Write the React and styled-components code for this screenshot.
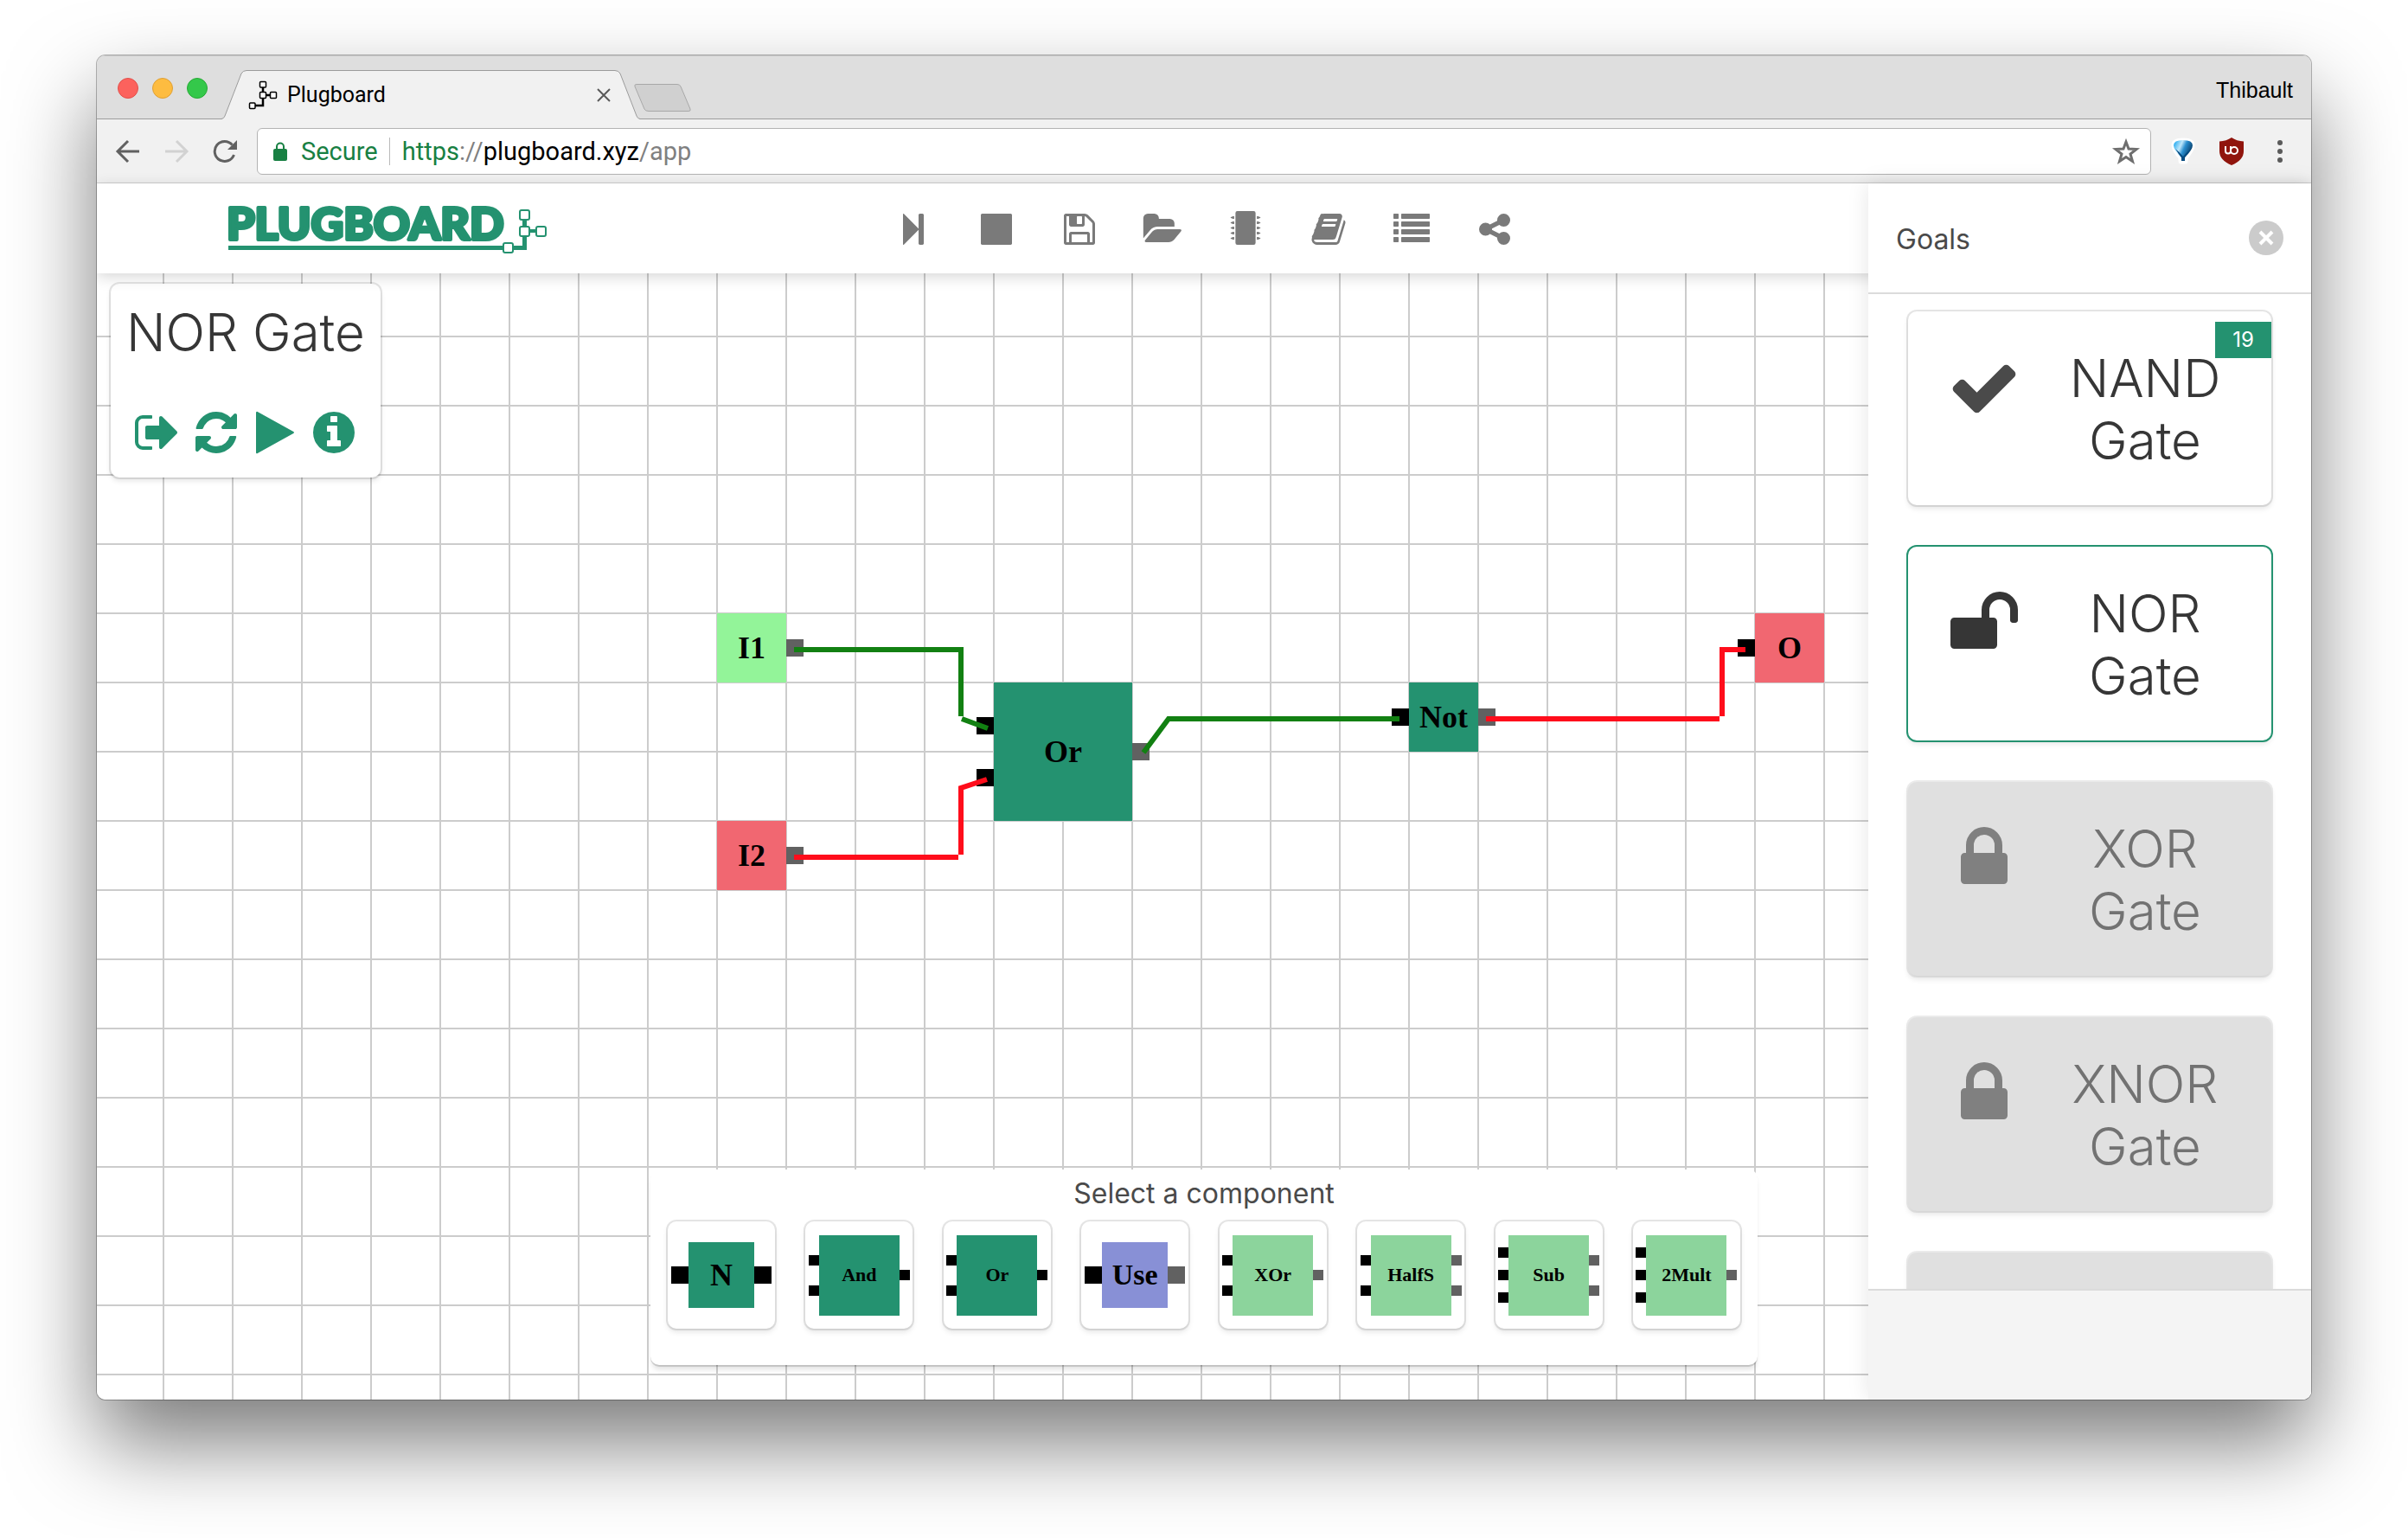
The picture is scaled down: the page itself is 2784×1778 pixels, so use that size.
import React from "react";
import styled, { createGlobalStyle, css } from "styled-components";

const green = "#249270";
const uiFont = `Inter, Roboto, "Liberation Sans", sans-serif`;
const chromeFont = `Roboto, "Liberation Sans", sans-serif`;

const GlobalStyle = createGlobalStyle`
  *, *::before, *::after { box-sizing: border-box; }
  body { margin: 0; background: #fff; color: #4a4a4a; font-family: ${uiFont}; }
  button { margin: 0; padding: 0; border: 0; background: none; color: inherit; font: inherit; cursor: pointer; }
  h1, h2, p, ul { margin: 0; padding: 0; }
  ul { list-style: none; }
  svg { display: block; overflow: visible; }
`;

/* ---------- icons ---------- */

const paths = {
  stepForward:
    "M429 1651q-19 19-32 13t-13-32v-1472q0-26 13-32t32 13l710 710q9 9 13 19v-678q0-26 19-45t45-19h128q26 0 45 19t19 45v1408q0 26-19 45t-45 19h-128q-26 0-45-19t-19-45v-678q-4 10-13 19z",
  stop: "M1664 192v1408q0 26-19 45t-45 19h-1408q-26 0-45-19t-19-45v-1408q0-26 19-45t45-19h1408q26 0 45 19t19 45z",
  save: "M512 1536h768v-384h-768v384zm896 0h128v-896q0-14-10-38.500t-20-34.500l-281-281q-10-10-34-20t-39-10v416q0 40-28 68t-68 28h-576q-40 0-68-28t-28-68v-416h-128v1280h128v-416q0-40 28-68t68-28h832q40 0 68 28t28 68v416zm-384-928v-320q0-13-9.500-22.500t-22.500-9.500h-192q-13 0-22.500 9.500t-9.500 22.500v320q0 13 9.500 22.500t22.500 9.500h192q13 0 22.500-9.500t9.500-22.500zm640 32v928q0 40-28 68t-68 28h-1344q-40 0-68-28t-28-68v-1344q0-40 28-68t68-28h928q40 0 88 20t76 48l280 280q28 28 48 76t20 88z",
  folder:
    "M1829 952q0 31-31 66l-336 396q-43 51-120.500 86.500t-143.500 35.500h-1088q-34 0-60.500-13t-26.500-43q0-31 31-66l336-396q43-51 120.500-86.500t143.500-35.500h1088q34 0 60.500 13t26.500 43zm-343-344v160h-832q-94 0-197 47.500t-164 119.500l-337 396-5 6q0-4-.5-12.500t-.5-12.500v-960q0-92 66-158t158-66h320q92 0 158 66t66 158v32h544q92 0 158 66t66 158z",
  chip:
    "M496 0h800q96 0 96 96v1472q0 96-96 96h-800q-96 0-96-96v-1472q0-96 96-96z" +
    [256, 512, 768, 1024, 1280]
      .map(
        (y) =>
          `M336 ${y}v128h-96v-32h-48q-32 0-32-32t32-32h48v-32zM1456 ${y}v128h96v-32h48q32 0 32-32t-32-32h-48v-32z`
      )
      .join(""),
  book: "M1703 478q40 57 18 129l-275 906q-19 64-76.500 107.500t-122.500 43.500h-923q-77 0-148.500-53.500t-99.500-131.500q-24-67-2-127 0-4 3-27t4-37q1-8-3-21.500t-3-19.500q2-11 8-21t16.500-23.500 16.500-23.500q23-38 45-91.500t30-91.500q3-10 .5-30t-.5-28q3-11 17-28t17-23q21-36 42-92t25-90q1-9-2.500-32t.5-28q4-13 22-30.500t22-22.500q19-26 42.500-84.500t27.500-96.500q1-8-3-25.500t-2-26.500q2-8 9-18t18-23 17-21q8-12 16.500-30.500t15-35 16-36 19.500-32 26.500-23.500 36-11.500 47.500 5.500l-1 3q38-9 51-9h761q74 0 114 56t18 130l-274 906q-36 119-71.500 153.500t-128.500 34.500h-869q-27 0-38 15-11 16-1 43 24 70 144 70h923q29 0 56-15.500t35-41.500l300-987q7-22 5-57 38 15 59 43zm-1064 2q-4 13 2 22.500t20 9.500h608q13 0 25.500-9.500t16.500-22.500l21-64q4-13-2-22.500t-20-9.500h-608q-13 0-25.500 9.500t-16.500 22.500zm-83 256q-4 13 2 22.500t20 9.500h608q13 0 25.500-9.500t16.500-22.500l21-64q4-13-2-22.500t-20-9.500h-608q-13 0-25.500 9.500t-16.500 22.500z",
  list: [128, 512, 896, 1280]
    .map(
      (y) =>
        `M32 ${y}h192q32 0 32 32v192q0 32-32 32h-192q-32 0-32-32v-192q0-32 32-32zM416 ${y}h1344q32 0 32 32v192q0 32-32 32h-1344q-32 0-32-32v-192q0-32 32-32z`
    )
    .join(""),
  share:
    "M1344 1024q133 0 226.500 93.500t93.500 226.500-93.500 226.500-226.500 93.500-226.500-93.500-93.500-226.500q0-12 2-34l-360-180q-92 86-218 86-133 0-226.500-93.500t-93.500-226.500 93.500-226.500 226.500-93.500q126 0 218 86l360-180q-2-22-2-34 0-133 93.500-226.500t226.500-93.500 226.500 93.500 93.500 226.500-93.500 226.500-226.500 93.500q-126 0-218-86l-360 180q2 22 2 34t-2 34l360 180q92-86 218-86z",
  signOut:
    "M704 1440q0 4 1 20t.5 26.500-3 23.500-10 19.500-20.500 6.500h-320q-119 0-203.500-84.500t-84.500-203.500v-704q0-119 84.500-203.500t203.500-84.500h320q13 0 22.500 9.500t9.500 22.500q0 4 1 20t.5 26.500-3 23.500-10 19.500-20.500 6.500h-320q-66 0-113 47t-47 113v704q0 66 47 113t113 47h312l11.500 1 11.500 3 8 5.500 7 9 2 13.500zm928-544q0 26-19 45l-544 544q-19 19-45 19t-45-19-19-45v-288h-448q-26 0-45-19t-19-45v-384q0-26 19-45t45-19h448v-288q0-26 19-45t45-19 45 19l544 544q19 19 19 45z",
  refresh:
    "M1639 1056q0 5-1 7-64 268-268 434.500t-478 166.500q-146 0-282.500-55t-243.500-157l-129 129q-19 19-45 19t-45-19-19-45v-448q0-26 19-45t45-19h448q26 0 45 19t19 45-19 45l-137 137q71 66 161 102t187 36q134 0 250-65t186-179q11-17 53-117 8-23 30-23h192q13 0 22.500 9.500t9.500 22.500zm25-800v448q0 26-19 45t-45 19h-448q-26 0-45-19t-19-45 19-45l138-138q-148-137-349-137-134 0-250 65t-186 179q-11 17-53 117-8 23-30 23h-199q-13 0-22.500-9.500t-9.500-22.500v-7q65-268 270-434.500t480-166.500q146 0 284 55.500t245 156.500l130-129q19-19 45-19t45 19 19 45z",
  play: "M1576 927l-1328 738q-23 13-39.500 3t-16.500-36v-1472q0-26 16.500-36t39.500 3l1328 738q23 13 23 31t-23 31z",
  info: "M1152 1376v-160q0-14-9-23t-23-9h-96v-512q0-14-9-23t-23-9h-320q-14 0-23 9t-9 23v160q0 14 9 23t23 9h96v320h-96q-14 0-23 9t-9 23v160q0 14 9 23t23 9h448q14 0 23-9t9-23zm-128-896v-160q0-14-9-23t-23-9h-192q-14 0-23 9t-9 23v160q0 14 9 23t23 9h192q14 0 23-9t9-23zm640 416q0 209-103 385.500t-279.500 279.500-385.500 103-385.500-103-279.500-279.500-103-385.500 103-385.500 279.500-279.500 385.500-103 385.500 103 279.500 279.500 103 385.500z",
  check:
    "M1671 566q0 40-28 68l-724 724-136 136q-28 28-68 28t-68-28l-136-136-362-362q-28-28-28-68t28-68l136-136q28-28 68-28t68 28l294 295 656-657q28-28 68-28t68 28l136 136q28 28 28 68z",
  unlock:
    "M1728 576v256q0 26-19 45t-45 19h-64q-26 0-45-19t-19-45v-256q0-106-75-181t-181-75-181 75-75 181v192h96q40 0 68 28t28 68v576q0 40-28 68t-68 28h-960q-40 0-68-28t-28-68v-576q0-40 28-68t68-28h672v-192q0-185 131.500-316.500t316.500-131.500 316.500 131.500 131.500 316.500z",
  lock: "M640 768h512v-192q0-106-75-181t-181-75-181 75-75 181v192zm832 96v576q0 40-28 68t-68 28h-960q-40 0-68-28t-28-68v-576q0-40 28-68t68-28h32v-192q0-184 132-316t316-132 316 132 132 316v192h32q40 0 68 28t28 68z",
};

const Icon = ({ name, size }) => (
  <svg width={size} height={size} viewBox="0 0 1792 1792" fill="currentColor" aria-hidden="true">
    <path d={paths[name]} />
  </svg>
);

/* ---------- browser window ---------- */

const Desktop = styled.div`
  display: flex;
  min-height: 100vh;
  padding: 64px 112px 160px;
`;

const Window = styled.div`
  flex: 1;
  min-width: 0;
  display: flex;
  flex-direction: column;
  border-radius: 10px;
  overflow: hidden;
  background: #fff;
  box-shadow: 0 0 0 1px rgba(0, 0, 0, 0.28), 0 50px 100px rgba(0, 0, 0, 0.52);
`;

const TabStrip = styled.div`
  display: flex;
  height: 74px;
  padding: 0 21px 0 24px;
  background: #dedede;
  box-shadow: inset 0 -2px 0 -1px #9b9b9b, inset 0 1px 0 #c4c4c4;
  font-family: ${chromeFont};
`;

const Lights = styled.div`
  display: flex;
  gap: 16px;
  padding-top: 26px;
  width: 120px;
`;

const Light = styled.button`
  width: 24px;
  height: 24px;
  && {
    border: 1px solid ${(p) => p.$edge};
    border-radius: 50%;
    background: ${(p) => p.$fill};
  }
`;

const Tab = styled.div`
  display: grid;
  width: 484px;
  padding-top: 17px;
  > * {
    grid-area: 1 / 1;
  }
`;

const TabLabel = styled.div`
  display: flex;
  align-items: center;
  padding: 0 34px 0 32px;
  gap: 12px;
  color: #000;
  font-size: 25px;
  line-height: 28px;
  span {
    flex: 1;
  }
`;

const NewTab = styled.button`
  align-self: flex-start;
  && {
    margin: 33px 0 0 -7px;
  }
`;

const Profile = styled.button`
  && {
    margin: 26px 0 0 auto;
    align-self: flex-start;
    color: #000;
    font-family: "Liberation Sans", Arial, sans-serif;
    font-size: 25px;
    line-height: 28px;
  }
`;

const BrowserBar = styled.div`
  display: flex;
  align-items: center;
  gap: 28px;
  height: 74px;
  padding: 0 22px;
  background: #f1f1f1;
  border-bottom: 1px solid #cfcfcf;
  font-family: ${chromeFont};
`;

const Address = styled.div`
  flex: 1;
  display: flex;
  align-items: center;
  height: 54px;
  margin: 0 -5px;
  padding: 0 13px 0 18px;
  background: #fff;
  border: 1px solid #b3b3b3;
  border-radius: 6px;
  font-size: 29px;
  line-height: 32px;
`;

const Secure = styled.button`
  display: flex;
  align-items: center;
  gap: 16px;
  && {
    padding-right: 13px;
    border-right: 1px solid #b9b9b9;
    color: #188043;
  }
`;

const Url = styled.div`
  flex: 1;
  padding-left: 14px;
  color: #000;
`;

const UrlPart = styled.span`
  color: ${(p) => (p.$secure ? "#188043" : "#808080")};
`;

/* ---------- application ---------- */

const AppShell = styled.div`
  flex: 1;
  display: grid;
  grid-template-columns: 4fr 1fr;
  grid-template-rows: 104px minmax(0, 1fr);
  min-height: 0;
`;

const TopBar = styled.header`
  grid-area: 1 / 1 / 2 / 3;
  z-index: 1;
  display: grid;
  grid-template-columns: 1fr auto 1fr;
  align-items: center;
  background: #fff;
  box-shadow: 0 4px 16px rgba(0, 0, 0, 0.16);
`;

const Brand = styled.a`
  justify-self: start;
  margin-left: 152px;
`;

const Tools = styled.nav`
  display: flex;
  gap: 54px;
  padding-top: 2px;
  color: #7a7a7a;
`;

const Board = styled.main`
  grid-area: 2 / 1 / 3 / 3;
  position: relative;
  display: flex;
  flex-direction: column;
  align-items: flex-start;
  justify-content: space-between;
  padding: 12px 16px 40px;
  background-color: #fff;
  background-image: linear-gradient(to right, #ccc 2px, transparent 2px),
    linear-gradient(to bottom, #ccc 2px, transparent 2px);
  background-size: 80px 80px;
  background-position: 76px 72px;
`;

const softCard = css`
  background: #fff;
  box-shadow: 0 4px 6px rgba(10, 10, 10, 0.1), 0 0 0 2px rgba(10, 10, 10, 0.1);
`;

const LevelCard = styled.section`
  position: relative;
  ${softCard}
  padding: 20px 18px 24px;
  border-radius: 10px;
  text-align: center;
`;

const Title = styled.h2`
  color: ${(p) => (p.$muted ? "#727272" : "#363636")};
  font-size: 60px;
  font-weight: 300;
  line-height: 72px;
`;

const LevelActions = styled.div`
  display: flex;
  justify-content: center;
  gap: 12px;
  margin-top: 52px;
  color: ${green};
`;

const Wires = styled.svg`
  position: absolute;
  left: 0;
  top: 0;
`;

const Placed = styled.div`
  position: absolute;
  left: ${(p) => p.$x}px;
  top: ${(p) => p.$y}px;
`;

const Gate = styled.div`
  display: flex;
  align-items: center;
`;

const Ports = styled.div`
  display: flex;
  flex-direction: column;
  gap: ${(p) => p.$gap}px;
`;

const Port = styled.i`
  width: ${(p) => p.$size}px;
  height: ${(p) => p.$size}px;
  background: ${(p) => (p.$dim ? "#616161" : "#000")};
`;

const Body = styled.div`
  display: flex;
  align-items: center;
  justify-content: center;
  width: ${(p) => p.$size}px;
  height: ${(p) => p.$size}px;
  background: ${(p) => p.$fill};
  color: #000;
  font: bold ${(p) => p.$font}px / 40px "Liberation Serif", "Times New Roman", serif;
`;

const Tray = styled.section`
  position: relative;
  align-self: center;
  width: 1280px;
  max-width: 100%;
  padding: 8px 20px 42px;
  background: #fff;
  border-radius: 10px;
  box-shadow: 0 2px 0 rgba(10, 10, 10, 0.14), 0 7px 6px -2px rgba(10, 10, 10, 0.12);
  text-align: center;
  p {
    font-size: 32px;
    line-height: 40px;
  }
`;

const TrayItems = styled.div`
  display: flex;
  justify-content: space-between;
  margin-top: 12px;
`;

const TrayButton = styled.button`
  display: flex;
  align-items: center;
  justify-content: center;
  width: 124px;
  height: 124px;
  && {
    ${softCard}
    border-radius: 10px;
  }
`;

const Goals = styled.aside`
  grid-area: 1 / 2 / 3 / 3;
  z-index: 2;
  display: flex;
  flex-direction: column;
  min-height: 0;
  background: #fff;
  box-shadow: 0 0 24px rgba(0, 0, 0, 0.1);
`;

const GoalsHead = styled.div`
  display: flex;
  align-items: center;
  justify-content: space-between;
  flex: none;
  height: 128px;
  padding: 0 32px;
  border-bottom: 2px solid #dbdbdb;
  h2 {
    padding-top: 4px;
    font-size: 32px;
    font-weight: 400;
    line-height: 40px;
  }
`;

const GoalList = styled.ul`
  flex: 1 1 0;
  min-height: 0;
  overflow: hidden;
  display: flex;
  flex-direction: column;
  gap: 48px;
  && {
    padding: 20px 46px 0;
  }
`;

const rings = { done: "rgba(10,10,10,.1)", open: green, locked: "rgba(10,10,10,.08)" };

const GoalCard = styled.li`
  position: relative;
  flex: none;
  border-radius: 10px;
  background: ${(p) => (p.$state === "locked" ? "#e0e0e0" : "#fff")};
  box-shadow: 0 0 0 2px ${(p) => rings[p.$state]}, 0 4px 6px rgba(10, 10, 10, 0.1);
`;

const GoalButton = styled.button`
  display: flex;
  align-items: flex-start;
  width: 100%;
  height: 224px;
  && {
    padding: 41px 48px 0 46px;
    gap: 46px;
  }
  svg {
    flex: none;
    margin-top: 5px;
    color: ${(p) => ({ done: "#4a4a4a", open: "#363636", locked: "#808080" }[p.$state])};
  }
  h2 {
    flex: 1;
  }
`;

const Badge = styled.span`
  position: absolute;
  top: 12px;
  right: 0;
  padding: 0 20px;
  background: ${green};
  color: #fff;
  font-size: 24px;
  line-height: 42px;
`;

const GoalsFoot = styled.div`
  flex: none;
  height: 128px;
  background: #f4f4f4;
  border-top: 2px solid #dbdbdb;
`;

const Logo = () => (
  <svg width="370" height="56" viewBox="0 0 370 56" aria-label="Plugboard">
    <text
      x="-2"
      y="41"
      fill={green}
      stroke={green}
      strokeWidth="4"
      strokeLinejoin="round"
      fontFamily="Lato, sans-serif"
      fontWeight="900"
      fontSize="52"
    >
      PLUGBOARD
    </text>
    <g fill="none" stroke={green}>
      <path d="M0 50.500H342.500V8" strokeWidth="5" />
      <path d="M342 31h16" strokeWidth="4" />
      <g fill="#fff" strokeWidth="2">
        <rect x="318" y="45" width="11" height="11" rx="2" />
        <rect x="337" y="7" width="11" height="11" rx="2" />
        <rect x="337" y="26" width="11" height="11" rx="2" />
        <rect x="356" y="26" width="11" height="11" rx="2" />
      </g>
    </g>
  </svg>
);

const Favicon = () => (
  <svg width="32" height="32" viewBox="0 0 32 32" fill="none" stroke="#000" aria-hidden="true">
    <path d="M6 28h10V4M16 16h12" strokeWidth="2.500" />
    <g fill="#fff" strokeWidth="1.500">
      <rect x="0.500" y="25" width="6.500" height="6.500" rx="1" />
      <rect x="12.500" y="0.500" width="7" height="6.500" rx="1" />
      <rect x="12.500" y="12.500" width="7" height="7" rx="1" />
      <rect x="24.500" y="12.500" width="7" height="7" rx="1" />
    </g>
  </svg>
);

const mint = "#8cd49c";

const GateView = ({ label, fill = green, ins = 0, outs = 0, size, font, port, dim }) => {
  const gap = (n) => (port === 20 ? 40 : n === 3 ? 14 : 23);
  return (
    <Gate>
      <Ports $gap={gap(ins)}>
        {Array.from({ length: ins }, (_, i) => (
          <Port key={i} $size={port} />
        ))}
      </Ports>
      <Body $size={size} $fill={fill} $font={font}>
        {label}
      </Body>
      <Ports $gap={gap(outs)}>
        {Array.from({ length: outs }, (_, i) => (
          <Port key={i} $size={port} $dim={dim} />
        ))}
      </Ports>
    </Gate>
  );
};

const boardGates = [
  { x: 717, y: 393, label: "I1", fill: "#93f499", size: 80, outs: 1 },
  { x: 717, y: 633, label: "I2", fill: "#f16771", size: 80, outs: 1 },
  { x: 1017, y: 473, label: "Or", size: 160, ins: 2, outs: 1 },
  { x: 1497, y: 473, label: "Not", size: 80, ins: 1, outs: 1 },
  { x: 1897, y: 393, label: "O", fill: "#f16771", size: 80, ins: 1 },
];

const trayGates = [
  { label: "N", ins: 1, outs: 1, size: 76, port: 20, font: 36 },
  { label: "And", ins: 2, outs: 1, size: 93, port: 12, font: 22 },
  { label: "Or", ins: 2, outs: 1, size: 93, port: 12, font: 22 },
  { label: "Use", ins: 1, outs: 1, size: 76, port: 20, font: 34, fill: "#8890d6", dim: true },
  { label: "XOr", ins: 2, outs: 1, size: 93, port: 12, font: 22, fill: mint, dim: true },
  { label: "HalfS", ins: 2, outs: 2, size: 93, port: 12, font: 22, fill: mint, dim: true },
  { label: "Sub", ins: 3, outs: 2, size: 93, port: 12, font: 22, fill: mint, dim: true },
  { label: "2Mult", ins: 3, outs: 1, size: 93, port: 12, font: 22, fill: mint, dim: true },
];

const tools = [
  ["stepForward", "Step"],
  ["stop", "Stop"],
  ["save", "Save"],
  ["folder", "Open"],
  ["chip", "Components"],
  ["book", "Guide"],
  ["list", "Goals"],
  ["share", "Share"],
];

const levelActions = [
  ["signOut", "Leave"],
  ["refresh", "Reset"],
  ["play", "Run"],
  ["info", "Info"],
];

const goals = [
  { name: "NAND Gate", state: "done", icon: "check", badge: 19 },
  { name: "NOR Gate", state: "open", icon: "unlock" },
  { name: "XOR Gate", state: "locked", icon: "lock" },
  { name: "XNOR Gate", state: "locked", icon: "lock" },
  { name: "", state: "locked" },
];

export default function App() {
  return (
    <Desktop>
      <GlobalStyle />
      <Window>
        <TabStrip>
          <Lights>
            <Light $fill="#fc625d" $edge="#e2504b" aria-label="Close window" />
            <Light $fill="#fdbc40" $edge="#dfa035" aria-label="Minimise window" />
            <Light $fill="#34c84a" $edge="#27aa35" aria-label="Zoom window" />
          </Lights>
          <Tab>
            <svg width="484" height="57" viewBox="0 0 484 57" aria-hidden="true">
              <path
                d="M0 57L4 53L23 4Q25 .5 29 .5H455Q459 .5 461 4L480 53L484 57Z"
                fill="#f1f1f1"
              />
              <path
                d="M0 56.500Q3 56 4 53L23 4Q25 .5 29 .5H455Q459 .5 461 4L480 53Q481 56 484 56.500"
                fill="none"
                stroke="#9b9b9b"
              />
            </svg>
            <TabLabel>
              <Favicon />
              <span>Plugboard</span>
              <button aria-label="Close tab">
                <svg width="16" height="16" viewBox="0 0 16 16" stroke="#5a5a5a" strokeWidth="2">
                  <path d="M1 1L15 15M15 1L1 15" />
                </svg>
              </button>
            </TabLabel>
          </Tab>
          <NewTab aria-label="New tab">
            <svg width="66" height="32" viewBox="0 0 66 32">
              <path
                d="M3 .5H50Q53 .5 54 3L65 29Q66 31.500 63 31.500H17Q13 31.500 12 29L1 3Q0 .5 3 .5Z"
                fill="#d0d0d0"
                stroke="#a8a8a8"
              />
            </svg>
          </NewTab>
          <Profile>Thibault</Profile>
        </TabStrip>

        <BrowserBar>
          <button aria-label="Back">
            <svg width="28" height="28" viewBox="0 0 28 28" fill="none" stroke="#616161" strokeWidth="3">
              <path d="M27 14H3M14 2L2 14L14 26" />
            </svg>
          </button>
          <button aria-label="Forward">
            <svg width="28" height="28" viewBox="0 0 28 28" fill="none" stroke="#d2d2d2" strokeWidth="3">
              <path d="M1 14H25M14 2L26 14L14 26" />
            </svg>
          </button>
          <button aria-label="Reload">
            <svg width="28" height="28" viewBox="0 0 28 28" fill="none" stroke="#616161" strokeWidth="3">
              <path d="M24.500 18A11.500 11.500 0 1 1 22.500 6.500" />
              <path d="M28 1V12H17Z" fill="#616161" stroke="none" />
            </svg>
          </button>
          <Address>
            <Secure>
              <svg width="16" height="22" viewBox="0 0 16 22" aria-hidden="true">
                <rect y="8" width="16" height="14" rx="2" fill="#188043" />
                <path d="M4 9V5.500A4 4 0 0 1 12 5.500V9" fill="none" stroke="#188043" strokeWidth="2" />
              </svg>
              Secure
            </Secure>
            <Url role="textbox" aria-label="Address" tabIndex={0}>
              <UrlPart $secure>https</UrlPart>
              <UrlPart>://</UrlPart>plugboard.xyz<UrlPart>/app</UrlPart>
            </Url>
            <button aria-label="Bookmark this page">
              <svg width="30" height="28" viewBox="0 0 30 28" fill="none" stroke="#6e6e6e" strokeWidth="3">
                <path d="M15 3L18 11L27 11.500L20 17L22.500 25.500L15 20.500L7.500 25.500L10 17L3 11.500L12 11Z" />
              </svg>
            </button>
          </Address>
          <button aria-label="Balloon extension">
            <svg width="28" height="32" viewBox="0 0 28 32">
              <defs>
                <linearGradient id="balloon" x1="0" x2="1" y1="0" y2="0.500">
                  <stop offset="0" stopColor="#08a0ee" />
                  <stop offset="0.400" stopColor="#bfe6fa" />
                  <stop offset="0.600" stopColor="#2a8fd0" />
                  <stop offset="1" stopColor="#05365f" />
                </linearGradient>
              </defs>
              <path
                d="M14 4Q24 4 24 9Q24 14 16 23V27H12V23Q4 14 4 9Q4 4 14 4Z"
                fill="#fff"
                stroke="#fff"
                strokeWidth="7"
                strokeLinejoin="round"
              />
              <path d="M14 3Q25 3 25 9Q25 14 16 23V27H12V23Q3 14 3 9Q3 3 14 3Z" fill="url(#balloon)" />
              <path d="M5 13Q10 17 14 22Q18 17 23 13Q20 18 16 23V27H12V23Q8 18 5 13Z" fill="#064a80" />
            </svg>
          </button>
          <button aria-label="Content blocker">
            <svg width="28" height="32" viewBox="0 0 28 32">
              <path d="M14 0Q20 4 28 4.500V16Q28 26 14 32Q0 26 0 16V4.500Q8 4 14 0Z" fill="#90150d" />
              <path
                d="M7 10V15.500A3 3 0 0 0 13 15.500V10V15.500M13 15A4 4 0 1 0 21 15A4 4 0 1 0 13 15"
                fill="none"
                stroke="#fff"
                strokeWidth="2"
              />
            </svg>
          </button>
          <button aria-label="Browser menu">
            <svg width="28" height="28" viewBox="0 0 28 28" fill="#5a5a5a">
              <circle cx="14" cy="4" r="3" />
              <circle cx="14" cy="14" r="3" />
              <circle cx="14" cy="24" r="3" />
            </svg>
          </button>
        </BrowserBar>

        <AppShell>
          <TopBar>
            <Brand href="#home">
              <Logo />
            </Brand>
            <Tools aria-label="Board tools">
              {tools.map(([icon, label]) => (
                <button key={icon} aria-label={label}>
                  <Icon name={icon} size={42} />
                </button>
              ))}
            </Tools>
          </TopBar>

          <Board>
            <LevelCard>
              <Title>NOR Gate</Title>
              <LevelActions>
                {levelActions.map(([icon, label]) => (
                  <button key={icon} aria-label={label}>
                    <Icon name={icon} size={56} />
                  </button>
                ))}
              </LevelActions>
            </LevelCard>

            {boardGates.map(({ x, y, ...gate }) => (
              <Placed key={gate.label} $x={x} $y={y}>
                <GateView {...gate} port={20} font={36} dim />
              </Placed>
            ))}
            <Wires width="2048" height="800" viewBox="0 0 2048 800" fill="none" strokeWidth="6">
              <g stroke="#128012">
                <path d="M806 435H999V512M1000 515L1030 526" />
                <path d="M1210 554L1239 515H1506" />
              </g>
              <g stroke="#ff0d1b">
                <path d="M806 675H996M999 672V595L1029 585" />
                <path d="M1606 515H1876M1879 512V435H1906" />
              </g>
            </Wires>

            <Tray>
              <p>Select a component</p>
              <TrayItems>
                {trayGates.map((gate) => (
                  <TrayButton key={gate.label}>
                    <GateView {...gate} />
                  </TrayButton>
                ))}
              </TrayItems>
            </Tray>
          </Board>

          <Goals>
            <GoalsHead>
              <h2>Goals</h2>
              <button aria-label="Close goals">
                <svg width="40" height="40" viewBox="0 0 40 40">
                  <circle cx="20" cy="20" r="20" fill="#cbcbcb" />
                  <path d="M13 13L27 27M27 13L13 27" stroke="#fff" strokeWidth="4" />
                </svg>
              </button>
            </GoalsHead>
            <GoalList>
              {goals.map(({ name, state, icon, badge }) => (
                <GoalCard key={name} $state={state}>
                  <GoalButton $state={state} disabled={state === "locked"}>
                    {icon && <Icon name={icon} size={84} />}
                    <Title $muted={state === "locked"}>{name}</Title>
                  </GoalButton>
                  {badge && <Badge>{badge}</Badge>}
                </GoalCard>
              ))}
            </GoalList>
            <GoalsFoot />
          </Goals>
        </AppShell>
      </Window>
    </Desktop>
  );
}
